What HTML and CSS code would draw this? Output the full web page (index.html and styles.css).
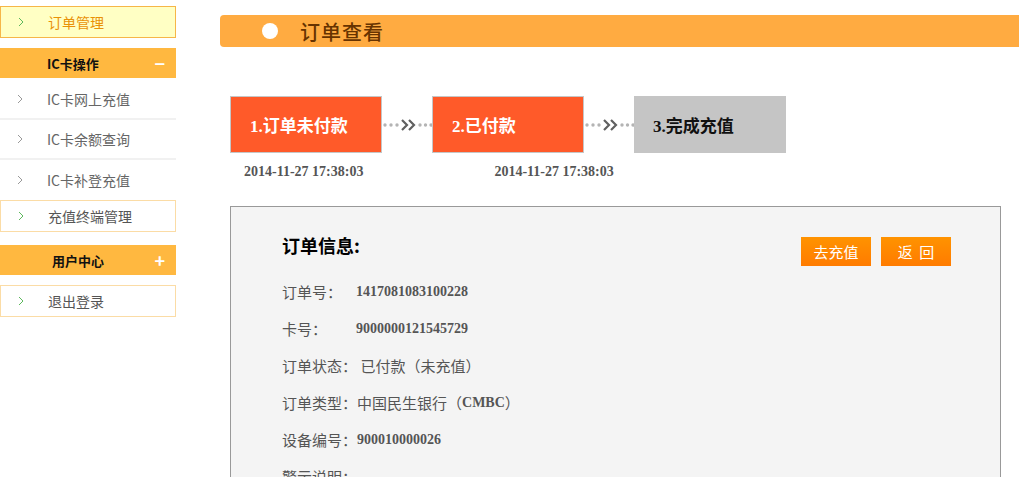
FILE: index.html
```html
<!DOCTYPE html>
<html>

<head>
    <title>订单查看</title>
    <meta charset="utf-8">
    <link rel="stylesheet" href="styles.css">
</head>

<body>
    <div class="wrap">
        <aside class="menu">
            <a class="item current" href="#"><svg class="pil" viewBox="0 0 6 10"><polyline points="1,1 5,5 1,9" /></svg>订单管理</a>

            <div class="kategori aaben"><span class="k1">IC卡操作</span><span class="tegn">−</span></div>
            <a class="item plain" href="#"><svg class="pil" viewBox="0 0 6 10"><polyline points="1,1 5,5 1,9" /></svg>IC卡网上充值</a>
            <a class="item plain" href="#"><svg class="pil" viewBox="0 0 6 10"><polyline points="1,1 5,5 1,9" /></svg>IC卡余额查询</a>
            <a class="item plain last" href="#"><svg class="pil" viewBox="0 0 6 10"><polyline points="1,1 5,5 1,9" /></svg>IC卡补登充值</a>
            <a class="item boks" href="#"><svg class="pil" viewBox="0 0 6 10"><polyline points="1,1 5,5 1,9" /></svg>充值终端管理</a>

            <div class="kategori lukket"><span class="k2">用户中心</span><span class="tegn">+</span></div>
            <a class="item boks" href="#"><svg class="pil" viewBox="0 0 6 10"><polyline points="1,1 5,5 1,9" /></svg>退出登录</a>
        </aside>

        <main class="indhold">
            <h1 class="titel"><span class="prik"></span>订单查看</h1>

            <div class="trin">
                <div class="step done">1.订单未付款</div>
                <svg class="pile" viewBox="0 0 50 16">
                    <circle cx="3" cy="8" r="1.7" /><circle cx="9" cy="8" r="1.7" /><circle cx="15" cy="8" r="1.7" />
                    <polyline class="ch" points="20,3 25,8 20,13" /><polyline class="ch" points="27,3 32,8 27,13" />
                    <circle cx="38" cy="8" r="1.7" /><circle cx="43.5" cy="8" r="1.7" /><circle cx="49" cy="8" r="1.7" />
                </svg>
                <div class="step done">2.已付款</div>
                <svg class="pile" viewBox="0 0 50 16">
                    <circle cx="3" cy="8" r="1.7" /><circle cx="9" cy="8" r="1.7" /><circle cx="15" cy="8" r="1.7" />
                    <polyline class="ch" points="20,3 25,8 20,13" /><polyline class="ch" points="27,3 32,8 27,13" />
                    <circle cx="38" cy="8" r="1.7" /><circle cx="43.5" cy="8" r="1.7" /><circle cx="49" cy="8" r="1.7" />
                </svg>
                <div class="step todo">3.完成充值</div>
            </div>

            <div class="datoer">
                <span class="dato">2014-11-27 17:38:03</span>
                <span class="spor"></span>
                <span class="dato">2014-11-27 17:38:03</span>
            </div>

            <section class="info">
                <div class="info-top">
                    <h3>订单信息:</h3>
                    <div class="knapper">
                        <button class="knap">去充值</button>
                        <button class="knap">返&nbsp;&nbsp;回</button>
                    </div>
                </div>
                <div class="linjer">
                    <p><span class="lbl fast">订单号：</span><span class="tal">1417081083100228</span></p>
                    <p><span class="lbl fast">卡号：</span><span class="tal">9000000121545729</span></p>
                    <p><span class="lbl">订单状态：</span>&nbsp;已付款（未充值）</p>
                    <p><span class="lbl">订单类型：</span>中国民生银行（<span class="tal">CMBC</span>）</p>
                    <p><span class="lbl">设备编号：</span><span class="tal">900010000026</span></p>
                    <p><span class="lbl">警示说明：</span></p>
                </div>
            </section>
        </main>
    </div>
</body></html>
```

FILE: styles.css
```css
body {
    margin: 0;
    font-family: "Noto Sans CJK SC", sans-serif;
    background: white;
    overflow: hidden;
}

.wrap {
    display: flex;
    align-items: flex-start;
}

/* venstre menu */
.menu {
    width: 176px;
    flex-shrink: 0;
    padding-top: 6px;
}

.item {
    display: flex;
    align-items: center;
    box-sizing: border-box;
    padding-left: 47px;
    font-size: 14px;
    color: #666;
    text-decoration: none;
    position: relative;
}

.item .pil {
    position: absolute;
    left: 17px;
    top: 50%;
    margin-top: -5px;
    width: 6px;
    height: 10px;
    fill: none;
    stroke: #999;
    stroke-width: 1;
}

.current {
    height: 32px;
    background: #ffffc4;
    border: 1px solid #f6b648;
    color: #e99106;
    margin-bottom: 10px;
}

.current .pil,
.boks .pil {
    stroke: #5cb85c;
}

.plain {
    height: 40px;
    border-bottom: 2px solid #f1f1f1;
}

.plain.last {
    border-bottom: none;
}

.boks {
    height: 32px;
    border: 1px solid #fbdca6;
    color: #555;
    margin-bottom: 13px;
}

.kategori {
    height: 30px;
    background: #ffb840;
    display: flex;
    align-items: center;
    justify-content: space-between;
    font-size: 13px;
    font-weight: bold;
    color: #111;
}

.kategori.aaben {
    margin-bottom: 2px;
}

.kategori.lukket {
    margin-bottom: 10px;
}

.kategori .k1 {
    padding-left: 47px;
}

.kategori .k2 {
    padding-left: 52px;
}

.kategori .tegn {
    color: white;
    font-size: 18px;
    font-weight: bold;
    padding-right: 11px;
}

/* indhold */
.indhold {
    margin-left: 44px;
    width: 799px;
    padding-top: 15px;
}

.titel {
    margin: 0;
    height: 32px;
    background: #ffab41;
    border-radius: 4px 0 0 4px;
    display: flex;
    align-items: center;
    font-size: 20px;
    font-weight: 500;
    color: #673300;
    letter-spacing: 1px;
}

.titel .prik {
    width: 16px;
    height: 16px;
    border-radius: 50%;
    background: white;
    margin-left: 42px;
    margin-right: 22px;
}

.trin {
    display: flex;
    align-items: center;
    margin-top: 49px;
    margin-left: 10px;
}

.step {
    width: 152px;
    height: 57px;
    box-sizing: border-box;
    display: flex;
    align-items: center;
    padding-left: 19px;
    font-family: "Liberation Serif", "Noto Sans CJK SC", serif;
    font-size: 17px;
    font-weight: bold;
}

.done {
    background: #ff5a29;
    border: 1px solid #c6c6c6;
    color: white;
}

.todo {
    background: #c5c5c5;
    color: #111;
}

.pile {
    width: 50px;
    height: 16px;
    fill: #b4b4b4;
}

.pile .ch {
    fill: none;
    stroke: #606060;
    stroke-width: 2.2;
}

.datoer {
    display: flex;
    align-items: center;
    margin: 10px 0 0 24px;
    height: 18px;
}

.dato {
    font-family: "Liberation Serif", serif;
    font-weight: bold;
    font-size: 14px;
    color: #555;
}

.spor {
    width: 131px;
}

.info {
    margin: 25px 0 0 10px;
    width: 771px;
    height: 300px;
    box-sizing: border-box;
    background: #f4f4f4;
    border: 1px solid #999;
    padding: 30px 49px 0 51px;
}

.info-top {
    display: flex;
    justify-content: space-between;
    align-items: flex-start;
}

.info-top h3 {
    margin: -2px 0 0;
    font-size: 18px;
    line-height: 20px;
    color: #000;
}

.knapper {
    display: flex;
    gap: 10px;
}

.knap {
    width: 70px;
    height: 29px;
    border: none;
    background: linear-gradient(#ff9300, #ff7b00);
    color: white;
    font-family: "Noto Sans CJK SC", sans-serif;
    font-size: 15px;
    padding: 0;
}

.linjer {
    margin-top: 7px;
}

.linjer p {
    margin: 0;
    height: 37px;
    display: flex;
    align-items: center;
    font-size: 15px;
    color: #555;
}

.lbl.fast {
    display: inline-block;
    width: 74px;
}

.tal {
    font-family: "Liberation Serif", serif;
    font-weight: bold;
    font-size: 14px;
    color: #555;
}
```
